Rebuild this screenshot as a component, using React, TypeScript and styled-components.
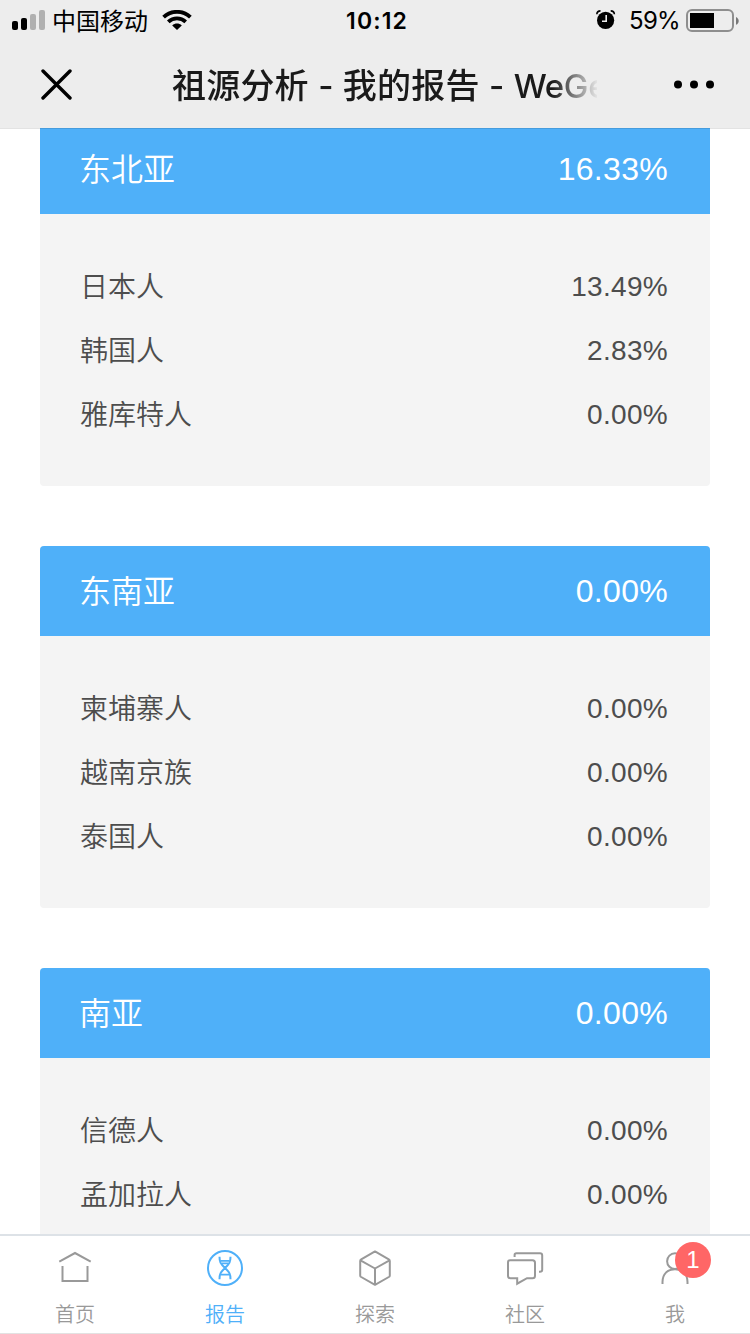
import React from 'react';
import styled, { createGlobalStyle } from 'styled-components';

const GlobalStyle = createGlobalStyle`
  * { box-sizing: border-box; }
  html, body { margin: 0; background: #fff; overflow: hidden; }
  body { font-family: "Liberation Sans", "Noto Sans CJK SC", sans-serif; }
`;

const Screen = styled.div`
  width: 750px;
  height: 1334px;
  display: flex;
  flex-direction: column;
  overflow: hidden;
  background: #fff;
`;

const TopBar = styled.header`
  flex: none;
  height: 128px;
  background: #ededed;
  box-shadow: 0 1px 0 rgba(0, 0, 0, 0.11);
  z-index: 1;
`;

const StatusBar = styled.div`
  height: 40px;
  padding: 0 11px 0 12px;
  display: grid;
  grid-template-columns: 1fr auto 1fr;
  align-items: center;
  color: #000;
`;

const StatusGroup = styled.div<{ $end?: boolean }>`
  display: flex;
  align-items: center;
  height: 40px;
  justify-content: ${(p) => (p.$end ? 'flex-end' : 'flex-start')};
`;

const Carrier = styled.span`
  font: 400 24px/40px "Noto Sans CJK SC", sans-serif;
  margin: 0 14px 0 7px;
`;

const Clock = styled.span`
  height: 40px;
  font: 600 23px/42px Inter, sans-serif;
  letter-spacing: 1.1px;
  padding-left: 3px;
`;

const BatteryText = styled.span`
  height: 40px;
  font: 400 24px/42px Inter, sans-serif;
  letter-spacing: -0.7px;
  margin: 0 6px 0 13px;
`;

const NavBar = styled.div`
  height: 88px;
  padding: 1px 35px 0 41px;
  display: flex;
  align-items: center;
`;

const NavTitle = styled.h1`
  margin: 0 auto 0 99px;
  width: 425px;
  height: 62px;
  overflow: hidden;
  white-space: nowrap;
  color: #1a1a1a;
  font: 500 34px/60px "Noto Sans CJK SC", sans-serif;
  letter-spacing: 0.2px;
  mask-image: linear-gradient(to right, #000 380px, transparent 427px);
`;

const Latin = styled.span`
  font-family: Inter, sans-serif;
  font-size: 33px;
  letter-spacing: -0.3px;
`;

const Dash = styled(Latin)`
  display: inline-block;
  width: 34px;
  text-align: center;
  letter-spacing: 0;
`;

const Report = styled.main`
  flex: 1;
  min-height: 0;
  overflow: hidden;
  display: flex;
  flex-direction: column;
  gap: 60px;
  padding: 0 40px;
`;

const Card = styled.section<{ $scrolled?: boolean }>`
  flex: none;
  border-radius: 4px;
  overflow: hidden;
  background: #f4f4f4;
  margin-top: ${(p) => (p.$scrolled ? '-4px' : '0')};
`;

const CardHeader = styled.div`
  height: 90px;
  padding: 0 42px 0 39px;
  display: flex;
  align-items: center;
  justify-content: space-between;
  background: #4fb0f9;
  color: #fff;
`;

const Region = styled.h2`
  margin: 0;
  font: 350 32px/86px "Noto Sans CJK SC", sans-serif;
  height: 90px;
`;

const RegionShare = styled.span`
  font-size: 32px;
  line-height: 90px;
  letter-spacing: 0.3px;
`;

const CardBody = styled.div`
  padding: 40px 42px 40px 40px;
`;

const Row = styled.div`
  height: 64px;
  display: flex;
  justify-content: space-between;
  color: #4d4d4d;
`;

const Group = styled.span`
  font: 350 28px/62px "Noto Sans CJK SC", sans-serif;
`;

const Share = styled.span`
  font-size: 28px;
  line-height: 66px;
  letter-spacing: 0.3px;
`;

const TabBar = styled.nav`
  flex: none;
  height: 100px;
  display: grid;
  grid-template-columns: repeat(5, 1fr);
  background: #fff;
  border-top: 2px solid #dde2e7;
  border-bottom: 1px solid #e2e2e2;
`;

const Tab = styled.div<{ $active?: boolean }>`
  display: flex;
  flex-direction: column;
  align-items: center;
  padding-top: 12px;
  color: ${(p) => (p.$active ? '#4fb0f9' : '#999')};
`;

const TabIcon = styled.div`
  position: relative;
  width: 40px;
  height: 40px;
  svg { display: block; }
`;

const TabLabel = styled.span`
  margin-top: 11px;
  font: 350 20px/30px "Noto Sans CJK SC", sans-serif;
`;

const Badge = styled.span`
  position: absolute;
  left: 20px;
  top: -6px;
  width: 36px;
  height: 36px;
  border-radius: 50%;
  background: #ff6666;
  color: #fff;
  text-align: center;
  font-size: 24px;
  line-height: 36px;
`;

const Signal = () => (
  <svg width="33" height="20" viewBox="0 0 33 20">
    <rect x="0" y="11" width="6" height="9" rx="2" fill="#000" />
    <rect x="9" y="8" width="6" height="12" rx="2" fill="#000" />
    <rect x="18" y="4" width="6" height="16" rx="2" fill="#b0b0b0" />
    <rect x="27" y="0" width="6" height="20" rx="2" fill="#b0b0b0" />
  </svg>
);

const Wifi = () => (
  <svg width="30" height="20" viewBox="0 0 30 20">
    <g fill="none" stroke="#000" strokeWidth="3.8">
      <path d="M1.6 7.2C9 0 21 0 28.4 7.2" />
      <path d="M6.3 11.9c4.9-4.6 12.5-4.6 17.4 0" />
    </g>
    <path d="M10.2 15.4c2.8-2.4 6.8-2.4 9.6 0L15 20z" />
  </svg>
);

const Alarm = () => (
  <svg width="20" height="20" viewBox="0 0 20 20">
    <circle cx="9.6" cy="10.3" r="8.6" />
    <path d="M.8 4.2C1 2 2.2.9 4.5.9M18.4 4.2C18.2 2 17 .9 14.7.9" fill="none" stroke="#000" strokeWidth="1.6" />
    <path d="M10.2 5v6.3H6" fill="none" stroke="#ededed" strokeWidth="1.6" />
  </svg>
);

const Battery = () => (
  <svg width="53" height="24" viewBox="0 0 53 24">
    <rect x="1" y="2" width="46" height="21" rx="5" fill="none" stroke="#8e8e8e" strokeWidth="2" />
    <path d="M4 5h24v15H4z" />
    <path d="M50 9c3.6 1.6 3.6 6.2 0 7.8z" fill="#777" />
  </svg>
);

const Close = () => (
  <svg width="32" height="32" viewBox="0 0 32 32" stroke="#000" strokeWidth="3.4" strokeLinecap="round">
    <path d="M2 2l27 27M29 2L2 29" />
  </svg>
);

const More = () => (
  <svg width="41" height="10" viewBox="0 0 41 10">
    <circle cx="4" cy="4.5" r="4" />
    <circle cx="20" cy="4.5" r="4" />
    <circle cx="36" cy="4.5" r="4" />
  </svg>
);

const lineIcon = { width: 40, height: 40, viewBox: '0 0 40 40', fill: 'none', stroke: 'currentColor', strokeWidth: 2 };

const HomeIcon = () => (
  <svg {...lineIcon}>
    <path d="M4.3 13.6L20 5l15.7 8.600M7.500 18v15h25V18" />
  </svg>
);

const DnaIcon = () => (
  <svg {...lineIcon}>
    <circle cx="20" cy="20" r="17" />
    <path d="M14.500 8.800c0 5 .8 6.700 5.500 11.200s5.500 6.200 5.500 11.200M25.500 8.800c0 5-.8 6.700-5.500 11.200s-5.500 6.200-5.500 11.200" />
    <path d="M15.500 12.800h9M17 15.300h6M16 26.700h8" strokeWidth="1.700" />
  </svg>
);

const CubeIcon = () => (
  <svg {...lineIcon} strokeLinejoin="round">
    <path d="M20 3.400l13.800 8q1 .6 1 1.600v14.400q0 1-1 1.600L20 36.800l-13.800-7.800q-1-.6-1-1.600V13q0-1 1-1.600zM5.500 12.300L20 20.500l14.500-8.200M20 20.500v16" />
  </svg>
);

const ChatIcon = () => (
  <svg {...lineIcon}>
    <path d="M9.600 9V7q0-1.800 1.800-1.800H35q2.200 0 2.200 2.200v14.400q0 2-2.200 2h-1" />
    <path d="M5 12.200h22.500q2.500 0 2.500 2.500v13q0 2.500-2.500 2.500H22l-9.800 5.500v-5.500H5.500Q3 30.200 3 27.700V14.500q0-2.300 2-2.300z" />
  </svg>
);

const UserIcon = () => (
  <svg {...lineIcon}>
    <circle cx="20" cy="13.200" r="7.900" />
    <path d="M7.500 36v-2C7.500 26 12.500 21.200 20 21.200S32.500 26 32.500 34v2" />
  </svg>
);

interface RegionData {
  name: string;
  share: string;
  groups: [string, string][];
}

const regions: RegionData[] = [
  { name: '东北亚', share: '16.33%', groups: [['日本人', '13.49%'], ['韩国人', '2.83%'], ['雅库特人', '0.00%']] },
  { name: '东南亚', share: '0.00%', groups: [['柬埔寨人', '0.00%'], ['越南京族', '0.00%'], ['泰国人', '0.00%']] },
  { name: '南亚', share: '0.00%', groups: [['信德人', '0.00%'], ['孟加拉人', '0.00%']] },
];

const tabs = [
  { label: '首页', Icon: HomeIcon },
  { label: '报告', Icon: DnaIcon, active: true },
  { label: '探索', Icon: CubeIcon },
  { label: '社区', Icon: ChatIcon },
  { label: '我', Icon: UserIcon, badge: 1 },
];

export default function App() {
  return (
    <Screen>
      <GlobalStyle />
      <TopBar>
        <StatusBar>
          <StatusGroup>
            <Signal />
            <Carrier>中国移动</Carrier>
            <Wifi />
          </StatusGroup>
          <Clock>10:12</Clock>
          <StatusGroup $end>
            <Alarm />
            <BatteryText>59%</BatteryText>
            <Battery />
          </StatusGroup>
        </StatusBar>
        <NavBar>
          <Close />
          <NavTitle>
            祖源分析<Dash>-</Dash>我的报告<Dash>-</Dash><Latin>WeGe</Latin>
          </NavTitle>
          <More />
        </NavBar>
      </TopBar>
      <Report>
        {regions.map((region, i) => (
          <Card key={region.name} $scrolled={i === 0}>
            <CardHeader>
              <Region>{region.name}</Region>
              <RegionShare>{region.share}</RegionShare>
            </CardHeader>
            <CardBody>
              {region.groups.map(([name, share]) => (
                <Row key={name}>
                  <Group>{name}</Group>
                  <Share>{share}</Share>
                </Row>
              ))}
            </CardBody>
          </Card>
        ))}
      </Report>
      <TabBar>
        {tabs.map(({ label, Icon, active, badge }) => (
          <Tab key={label} $active={active}>
            <TabIcon>
              <Icon />
              {badge && <Badge>{badge}</Badge>}
            </TabIcon>
            <TabLabel>{label}</TabLabel>
          </Tab>
        ))}
      </TabBar>
    </Screen>
  );
}
